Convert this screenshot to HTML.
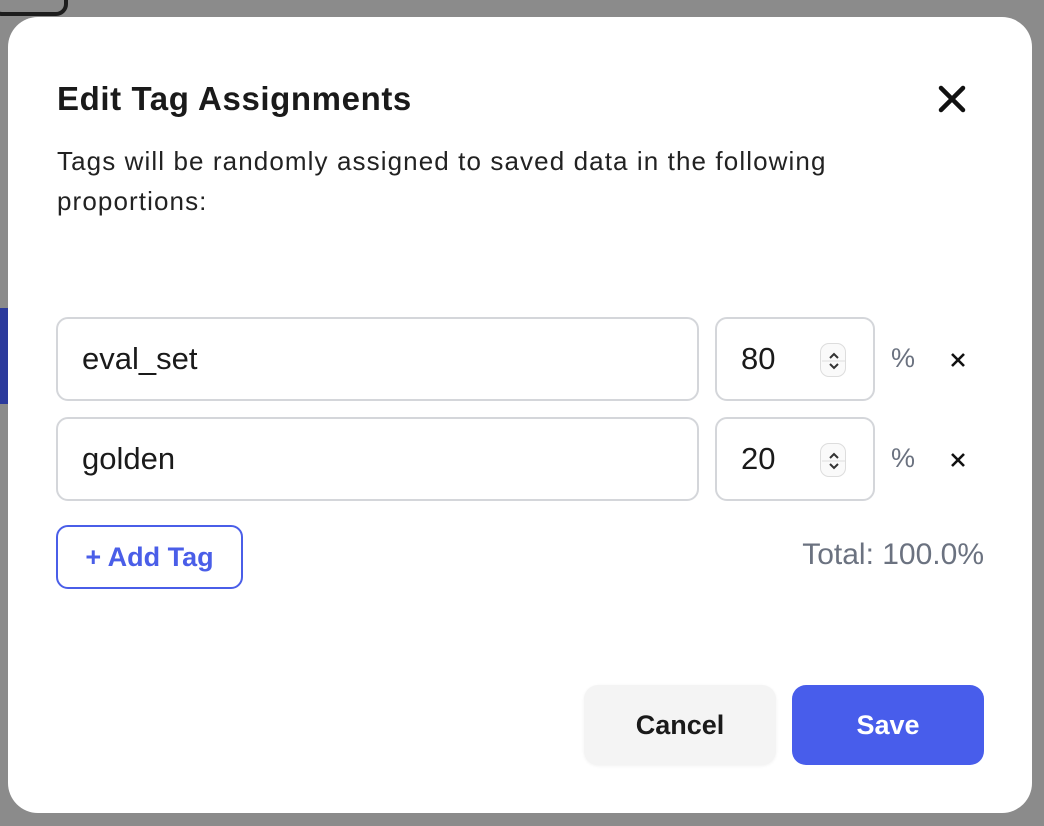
<!DOCTYPE html>
<html><head><style>
*{box-sizing:border-box;margin:0;padding:0}
body{width:1044px;height:826px;background:#8b8b8b;position:relative;overflow:hidden;font-family:"Liberation Sans",sans-serif;color:#1a1a1a}
.abs{position:absolute}
.modal{left:8px;top:17px;width:1024px;height:796px;background:#fff;border-radius:30px}
.inp{border:2px solid #d4d6da;border-radius:12px;background:#fff;font-size:31px;padding-left:24px;display:flex;align-items:center}
.spin{width:26px;height:34px;border:1px solid #ddd;border-radius:9px;background:#fafafa}
</style></head><body>
<div class="abs" style="left:-10px;top:-20px;width:78px;height:36px;border:4px solid #1d1d1d;border-radius:12px"></div>
<div class="abs" style="left:0;top:308px;width:10px;height:96px;background:#2b3a9c"></div>
<div class="abs modal"></div>
<div class="abs" style="left:57px;top:80px;font-size:33px;font-weight:bold;color:#1a1a1a;letter-spacing:0.6px">Edit Tag Assignments</div>
<svg class="abs" style="left:938px;top:85px" width="28" height="28" viewBox="0 0 28 28"><path d="M3 3L25 25M25 3L3 25" stroke="#111" stroke-width="4.5" stroke-linecap="round"/></svg>
<div class="abs" style="left:57px;top:141px;width:800px;font-size:26px;letter-spacing:1.1px;line-height:40px;color:#222">Tags will be randomly assigned to saved data in the following proportions:</div>

<div class="abs inp" style="left:56px;top:317px;width:643px;height:84px">eval_set</div>
<div class="abs inp" style="left:715px;top:317px;width:160px;height:84px">80</div>
<div class="abs spin" style="left:820px;top:343px"><svg width="26" height="34" viewBox="0 0 26 34"><path d="M9 14l4-4 4 4M9 20l4 4 4-4" stroke="#333" stroke-width="2" fill="none"/><path d="M1 17h24" stroke="#ddd"/></svg></div>
<div class="abs" style="left:891px;top:343px;font-size:27px;color:#6b7280">%</div>
<svg class="abs" style="left:950px;top:352px" width="16" height="16" viewBox="0 0 16 16"><path d="M2 2L14 14M14 2L2 14" stroke="#111" stroke-width="2.6"/></svg>

<div class="abs inp" style="left:56px;top:417px;width:643px;height:84px">golden</div>
<div class="abs inp" style="left:715px;top:417px;width:160px;height:84px">20</div>
<div class="abs spin" style="left:820px;top:443px"><svg width="26" height="34" viewBox="0 0 26 34"><path d="M9 14l4-4 4 4M9 20l4 4 4-4" stroke="#333" stroke-width="2" fill="none"/><path d="M1 17h24" stroke="#ddd"/></svg></div>
<div class="abs" style="left:891px;top:443px;font-size:27px;color:#6b7280">%</div>
<svg class="abs" style="left:950px;top:452px" width="16" height="16" viewBox="0 0 16 16"><path d="M2 2L14 14M14 2L2 14" stroke="#111" stroke-width="2.6"/></svg>

<div class="abs" style="left:56px;top:525px;width:187px;height:64px;border:2px solid #4a5ee8;border-radius:12px;color:#4a5ee8;font-size:27px;font-weight:bold;display:flex;align-items:center;justify-content:center">+ Add Tag</div>
<div class="abs" style="right:60px;top:538px;font-size:30px;color:#6b7280">Total: 100.0%</div>

<div class="abs" style="left:584px;top:685px;width:192px;height:80px;background:#f4f4f4;border-radius:14px;box-shadow:0 1px 3px rgba(0,0,0,.06);font-size:27px;font-weight:bold;display:flex;align-items:center;justify-content:center">Cancel</div>
<div class="abs" style="left:792px;top:685px;width:192px;height:80px;background:#485deb;border-radius:14px;color:#fff;font-size:27px;font-weight:bold;display:flex;align-items:center;justify-content:center">Save</div>
</body></html>
